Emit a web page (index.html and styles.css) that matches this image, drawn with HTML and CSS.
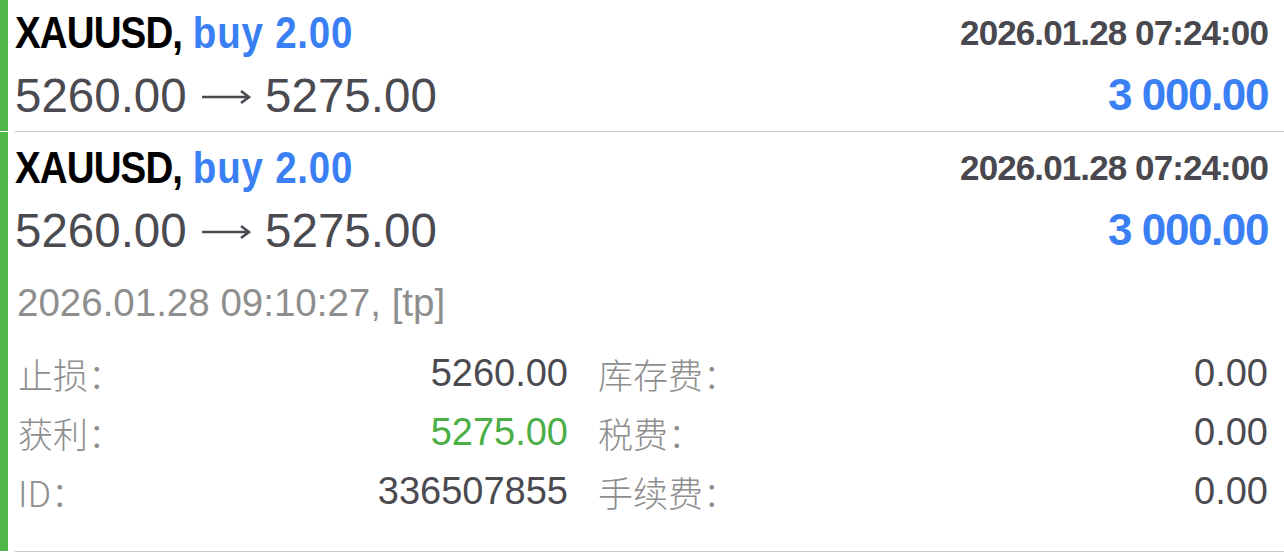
FILE: index.html
```html
<!DOCTYPE html>
<html lang="zh-CN">
<head>
    <meta charset="utf-8">
    <title>History</title>
    <link rel="stylesheet" href="styles.css">
</head>
<body>
    <div class="list">
        <div class="trade">
            <div class="bar"></div>
            <div class="body">
                <div class="row">
                    <span class="title"><span class="sym">XAUUSD,</span> <span class="side">buy 2.00</span></span>
                    <span class="time">2026.01.28 07:24:00</span>
                </div>
                <div class="row">
                    <span class="route">5260.00 <svg class="arrow" width="50" height="20" viewBox="0 0 50 20"><path d="M1 10H48M40 4L48 10L40 16" fill="none" stroke="currentColor" stroke-width="2.6"/></svg> 5275.00</span>
                    <span class="profit">3 000.00</span>
                </div>
            </div>
        </div>

        <div class="trade expanded">
            <div class="bar"></div>
            <div class="body">
                <div class="row">
                    <span class="title"><span class="sym">XAUUSD,</span> <span class="side">buy 2.00</span></span>
                    <span class="time">2026.01.28 07:24:00</span>
                </div>
                <div class="row">
                    <span class="route">5260.00 <svg class="arrow" width="50" height="20" viewBox="0 0 50 20"><path d="M1 10H48M40 4L48 10L40 16" fill="none" stroke="currentColor" stroke-width="2.6"/></svg> 5275.00</span>
                    <span class="profit">3 000.00</span>
                </div>
                <div class="closed">2026.01.28 09:10:27, [tp]</div>
                <div class="details">
                    <div class="cell"><span class="label">止损：</span><span class="value">5260.00</span></div>
                    <div class="cell"><span class="label">库存费：</span><span class="value">0.00</span></div>
                    <div class="cell"><span class="label">获利：</span><span class="value green">5275.00</span></div>
                    <div class="cell"><span class="label">税费：</span><span class="value">0.00</span></div>
                    <div class="cell"><span class="label">ID：</span><span class="value">336507855</span></div>
                    <div class="cell"><span class="label">手续费：</span><span class="value">0.00</span></div>
                </div>
            </div>
        </div>
    </div>
</body>
</html>
```

FILE: styles.css
```css
/* Trade history list */
body {
    margin: 0;
    background: #fff;
    font-family: "Liberation Sans", Arial, "Noto Sans CJK SC", sans-serif;
}

.list {
    margin-top: -3px; /* list is scrolled a little */
}

.trade {
    display: flex;
}

.bar {
    width: 8px;
    flex: none;
    background: #4fb648;
    margin-bottom: 1px;
}

.body {
    flex: 1;
    margin-left: 7px;
    padding: 5px 16px 5px 0;
    border-bottom: 1px solid #c9c9cc;
}

.expanded .body {
    padding-bottom: 30px;
}

.row {
    display: flex;
    justify-content: space-between;
    align-items: center;
    height: 62px;
    white-space: nowrap;
}

/* first line */
.title {
    display: inline-block;
    font-size: 44px;
    font-weight: bold;
    transform: scaleX(0.875);
    transform-origin: left center;
}

.sym {
    color: #000;
    letter-spacing: -1px;
}

.side {
    color: #3a7ff4;
    letter-spacing: 0.9px;
}

.time {
    font-size: 35px;
    font-weight: bold;
    letter-spacing: -0.9px;
    color: #48484e;
}

/* second line */
.route {
    font-size: 47.5px;
    color: #4a4a50;
}

.arrow {
    vertical-align: 5px;
    margin: 0 1px;
}

.profit {
    font-size: 44px;
    font-weight: bold;
    letter-spacing: -1.4px;
    color: #3a7ff4;
}

/* expanded part */
.closed {
    margin: 14px 0 0 2px;
    height: 56px;
    line-height: 56px;
    font-size: 38.5px;
    color: #8e8e8e;
}

.details {
    display: grid;
    grid-template-columns: 550px 1fr;
    grid-auto-rows: 59px;
    column-gap: 30px;
    margin: 13px 0 0 3px;
}

.cell {
    display: flex;
    justify-content: space-between;
    align-items: center;
}

.label {
    font-family: "Noto Sans CJK SC", sans-serif;
    font-size: 35px;
    font-weight: 300;
    color: #8e8e8e;
}

.value {
    font-size: 38px;
    color: #4a4a50;
}

.value.green {
    color: #4cae46;
}
```
